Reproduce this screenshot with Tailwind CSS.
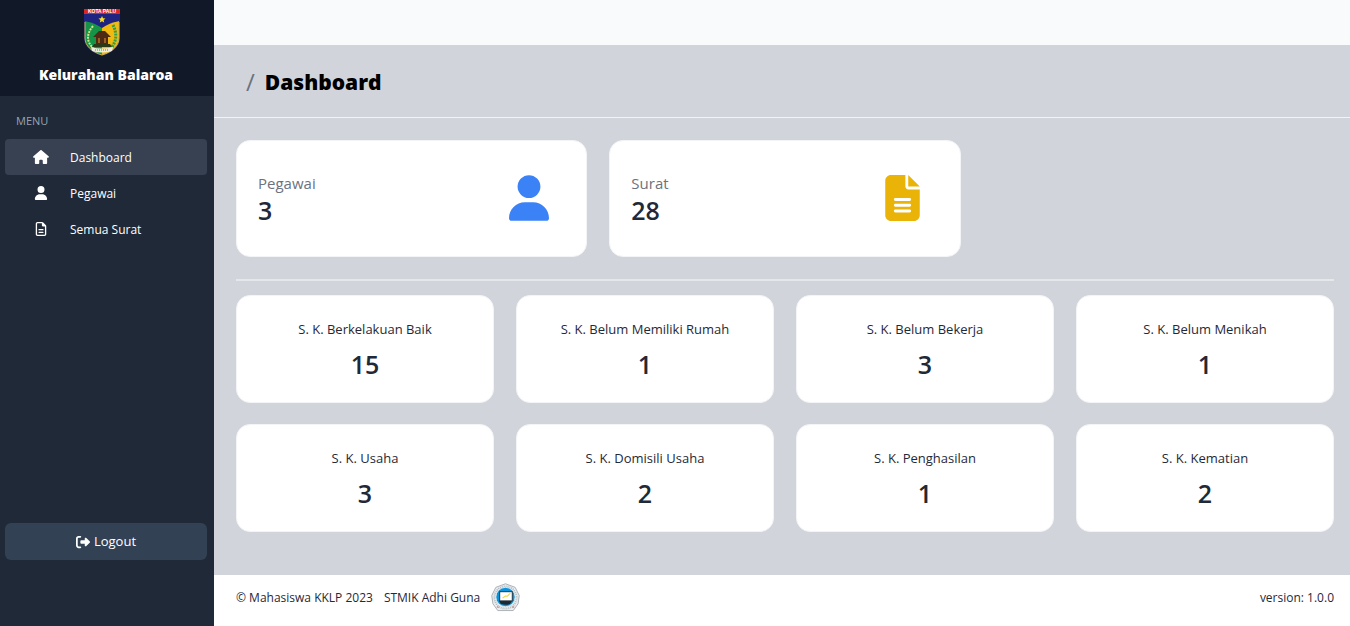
<!DOCTYPE html>
<html lang="id">
<head>
<meta charset="utf-8">
<meta name="viewport" content="width=device-width, initial-scale=1">
<title>Dashboard - Kelurahan Balaroa</title>
<script src="https://cdn.jsdelivr.net/npm/@tailwindcss/browser@4"></script>
</head>
<body class="flex min-h-screen bg-[#d1d5db] font-['Open_Sans','Noto_Sans',sans-serif] text-[#1f2937]">

<svg class="hidden" aria-hidden="true">
  <symbol id="house" viewBox="0 0 576 512"><path d="M575.8 255.5c0 18-15 32.1-32 32.1h-32l.7 160.2c0 2.7-.2 5.4-.5 8.1V472c0 22.1-17.9 40-40 40H456c-1.1 0-2.2 0-3.3-.1c-1.4 .1-2.8 .1-4.2 .1H416 392c-22.1 0-40-17.9-40-40V448 384c0-17.7-14.3-32-32-32H256c-17.7 0-32 14.3-32 32v64 24c0 22.1-17.9 40-40 40H160 128.1c-1.5 0-3-.1-4.5-.2c-1.2 .1-2.4 .2-3.6 .2H104c-22.1 0-40-17.9-40-40V360c0-.9 0-1.9 .1-2.8V287.6H32c-18 0-32-14-32-32.1c0-9 3-17 10-24L266.4 8c7-7 15-8 22-8s15 2 21 7L564.8 231.5c8 7 12 15 11 24z"/></symbol>
  <symbol id="user" viewBox="0 0 448 512"><path d="M224 256A128 128 0 1 0 224 0a128 128 0 1 0 0 256zm-45.7 48C79.8 304 0 383.8 0 482.3C0 498.7 13.3 512 29.7 512H418.3c16.4 0 29.7-13.3 29.7-29.7C448 383.8 368.2 304 269.7 304H178.3z"/></symbol>
  <symbol id="file" viewBox="0 0 384 512"><path d="M64 464c-8.8 0-16-7.2-16-16V64c0-8.8 7.2-16 16-16H224v80c0 17.7 14.3 32 32 32h80V448c0 8.8-7.2 16-16 16H64zM64 0C28.7 0 0 28.7 0 64V448c0 35.3 28.7 64 64 64H320c35.3 0 64-28.7 64-64V154.5c0-17-6.7-33.3-18.7-45.3L274.7 18.7C262.7 6.7 246.5 0 229.5 0H64zm56 256c-13.3 0-24 10.7-24 24s10.7 24 24 24H264c13.3 0 24-10.7 24-24s-10.7-24-24-24H120zm0 96c-13.3 0-24 10.7-24 24s10.7 24 24 24H264c13.3 0 24-10.7 24-24s-10.7-24-24-24H120z"/></symbol>
  <symbol id="file-solid" viewBox="0 0 384 512"><path d="M64 0C28.7 0 0 28.7 0 64V448c0 35.3 28.7 64 64 64H320c35.3 0 64-28.7 64-64V160H256c-17.7 0-32-14.3-32-32V0H64zM256 0V128H384L256 0zM112 256H272c8.8 0 16 7.2 16 16s-7.2 16-16 16H112c-8.8 0-16-7.2-16-16s7.2-16 16-16zm0 64H272c8.8 0 16 7.2 16 16s-7.2 16-16 16H112c-8.8 0-16-7.2-16-16s7.2-16 16-16zm0 64H272c8.8 0 16 7.2 16 16s-7.2 16-16 16H112c-8.8 0-16-7.2-16-16s7.2-16 16-16z"/></symbol>
  <symbol id="logout" viewBox="0 0 512 512"><path d="M377.9 105.9L500.7 228.7c7.2 7.2 11.3 17.1 11.3 27.3s-4.1 20.1-11.3 27.3L377.9 406.1c-6.4 6.4-15 9.9-24 9.9c-18.7 0-33.9-15.2-33.9-33.9l0-62.1-128 0c-17.7 0-32-14.3-32-32l0-64c0-17.7 14.3-32 32-32l128 0 0-62.1c0-18.7 15.2-33.9 33.9-33.9c9 0 17.6 3.6 24 9.9zM160 96L96 96c-17.7 0-32 14.3-32 32l0 256c0 17.7 14.3 32 32 32l64 0c17.7 0 32 14.3 32 32s-14.3 32-32 32l-64 0c-53 0-96-43-96-96L0 128C0 75 43 32 96 32l64 0c17.7 0 32 14.3 32 32s-14.3 32-32 32z"/></symbol>
</svg>

<aside class="flex w-[214px] shrink-0 flex-col bg-[#1f2937] text-white">
  <div class="flex h-24 flex-col items-center bg-[#111827] pt-2 pr-[2px]">
    <div class="pr-2">
      <svg class="h-12 w-9" viewBox="0 0 36 48" role="img" aria-label="Lambang Kota Palu">
        <path d="M0 6h36v24c0 9-8 15-18 18C8 45 0 39 0 30z" fill="#1e2480"/>
        <path d="M1 13Q11 15 18 20V47C8 44 1 38 1 30z" fill="#159447"/>
        <path d="M35 13Q25 15 18 20V47C28 44 35 38 35 30z" fill="#f2b90f"/>
        <path d="M0 6h36v7Q18 14 18 19Q18 14 0 13z" fill="#1e2480"/>
        <path d="M1 14v16c0 8 7 14 17 17c10-3 17-9 17-17V14" fill="none" stroke="#c9b04a" stroke-width="1"/>
        <path d="M9 18Q-1 30 9 40" fill="none" stroke="#d5e08c" stroke-width="2" stroke-dasharray="2 1"/>
        <path d="M29 17Q35 29 28 39" fill="none" stroke="#2f9e48" stroke-width="3" stroke-dasharray="2 1"/>
        <path d="M9 29l6-6h6l6 6h-3v7H12v-7z" fill="#4d2a14"/>
        <path d="M14 30h2v5h-2zM20 30h2v5h-2z" fill="#9a5f22"/>
        <path d="M10 36h16l2 3H8z" fill="#2b3a16"/>
        <path d="M7 39q11 3 22 0l-1 4q-10 3-20 0z" fill="#eeecdc"/>
        <path d="M11 42h14" stroke="#777" stroke-width="1" stroke-dasharray="1 1"/>
        <path d="M18 8l1 2.300 2.500.2-1.900 1.600.6 2.400-2.200-1.300-2.200 1.300.6-2.400-1.900-1.600 2.500-.2z" fill="#ffe11b"/>
        <rect width="36" height="5" y="1" fill="#dc2626"/>
        <text x="18" y="5" text-anchor="middle" font-family="Liberation Sans, sans-serif" font-size="5" font-weight="700" fill="#fff">KOTA PALU</text>
      </svg>
    </div>
    <h2 class="mt-[9px] text-[14px] leading-5 font-extrabold">Kelurahan Balaroa</h2>
  </div>

  <p class="mt-4 px-4 text-[11px] leading-[18px] text-[#9ca3af]">MENU</p>
  <nav class="mt-[9px] flex flex-col pr-[7px] pl-[5px] text-xs">
    <a href="#" aria-current="page" class="flex h-9 items-center rounded-sm bg-[#374151]"><span class="flex w-[65px] justify-center pr-px pb-px pl-2"><svg class="h-[14px] w-4 fill-current" aria-hidden="true"><use href="#house"/></svg></span><span class="pt-px">Dashboard</span></a>
    <a href="#" class="flex h-9 items-center rounded-sm"><span class="flex w-[65px] justify-center pr-px pb-px pl-2"><svg class="h-[14px] w-4 fill-current" aria-hidden="true"><use href="#user"/></svg></span><span class="pt-px">Pegawai</span></a>
    <a href="#" class="flex h-9 items-center rounded-sm"><span class="flex w-[65px] justify-center pr-px pb-px pl-2"><svg class="h-[14px] w-4 fill-current" aria-hidden="true"><use href="#file"/></svg></span><span class="pt-px">Semua Surat</span></a>
  </nav>

  <div class="mt-auto pr-[7px] pb-[66px] pl-[5px]">
    <button type="button" class="flex h-[37px] w-full items-center justify-center gap-1 rounded-md bg-[#334155] text-[13px]"><svg class="size-[14px] fill-current" aria-hidden="true"><use href="#logout"/></svg>Logout</button>
  </div>
</aside>

<div class="flex min-w-0 grow flex-col">
  <div class="h-[45px] bg-[#f9fafb]"></div>
  <header class="flex h-[73px] items-center gap-[10px] border-b border-[#f3f4f6] px-8 pt-px">
    <span class="text-2xl text-[#6b7280]">/</span>
    <h1 class="text-[21px] leading-8 font-extrabold text-black">Dashboard</h1>
  </header>

  <main class="grow pt-[22px] pr-4 pb-[43px] pl-[22px]">
    <div class="grid grid-cols-3 gap-[22px]">
      <section class="flex h-[117px] items-center justify-between rounded-[14px] border border-[#f3f4f6] bg-white pr-[37px] pb-[2px] pl-[21px]">
        <div>
          <h3 class="text-[15px] leading-6 text-[#6b7280]">Pegawai</h3>
          <p class="text-[25px] leading-[30px] font-semibold">3</p>
        </div>
        <svg class="h-[46px] w-10 fill-[#3b82f6]" aria-hidden="true"><use href="#user"/></svg>
      </section>
      <section class="flex h-[117px] items-center justify-between rounded-[14px] border border-[#f3f4f6] bg-white pr-10 pb-[2px] pl-[21px]">
        <div>
          <h3 class="text-[15px] leading-6 text-[#6b7280]">Surat</h3>
          <p class="text-[25px] leading-[30px] font-semibold">28</p>
        </div>
        <svg class="h-[46px] w-[35px] fill-[#eab308]" aria-hidden="true"><use href="#file-solid"/></svg>
      </section>
    </div>

    <hr class="mt-[22px] mb-[14px] border-t-2 border-[#e5e7eb]">

    <div class="grid grid-cols-4 gap-x-[22px] gap-y-[21px] text-center">
      <section class="h-[108px] rounded-[14px] border border-[#f3f4f6] bg-white pt-[23px]"><h3 class="text-[13px] leading-5">S. K. Berkelakuan Baik</h3><p class="mt-[9px] text-[25px] leading-8 font-semibold">15</p></section>
      <section class="h-[108px] rounded-[14px] border border-[#f3f4f6] bg-white pt-[23px]"><h3 class="text-[13px] leading-5">S. K. Belum Memiliki Rumah</h3><p class="mt-[9px] text-[25px] leading-8 font-semibold">1</p></section>
      <section class="h-[108px] rounded-[14px] border border-[#f3f4f6] bg-white pt-[23px]"><h3 class="text-[13px] leading-5">S. K. Belum Bekerja</h3><p class="mt-[9px] text-[25px] leading-8 font-semibold">3</p></section>
      <section class="h-[108px] rounded-[14px] border border-[#f3f4f6] bg-white pt-[23px]"><h3 class="text-[13px] leading-5">S. K. Belum Menikah</h3><p class="mt-[9px] text-[25px] leading-8 font-semibold">1</p></section>
      <section class="h-[108px] rounded-[14px] border border-[#f3f4f6] bg-white pt-[23px]"><h3 class="text-[13px] leading-5">S. K. Usaha</h3><p class="mt-[9px] text-[25px] leading-8 font-semibold">3</p></section>
      <section class="h-[108px] rounded-[14px] border border-[#f3f4f6] bg-white pt-[23px]"><h3 class="text-[13px] leading-5">S. K. Domisili Usaha</h3><p class="mt-[9px] text-[25px] leading-8 font-semibold">2</p></section>
      <section class="h-[108px] rounded-[14px] border border-[#f3f4f6] bg-white pt-[23px]"><h3 class="text-[13px] leading-5">S. K. Penghasilan</h3><p class="mt-[9px] text-[25px] leading-8 font-semibold">1</p></section>
      <section class="h-[108px] rounded-[14px] border border-[#f3f4f6] bg-white pt-[23px]"><h3 class="text-[13px] leading-5">S. K. Kematian</h3><p class="mt-[9px] text-[25px] leading-8 font-semibold">2</p></section>
    </div>
  </main>

  <footer class="flex items-center justify-between bg-white pt-2 pr-4 pb-[14px] pl-[22px] text-xs">
    <div class="flex items-center gap-[11px]">
      <span>© Mahasiswa KKLP 2023</span>
      <span>STMIK Adhi Guna</span>
      <svg class="size-[29px]" viewBox="0 0 30 30" role="img" aria-label="Logo STMIK Adhi Guna">
        <path d="M15 .8L25 4.500 29.200 13 28 21.500 23 28.500H7L2 21.500.8 13 5 4.500z" fill="#eceff1" stroke="#a9afb3" stroke-width="1" stroke-linejoin="round"/>
        <circle cx="15" cy="15" r="11.500" fill="none" stroke="#b4babe" stroke-width="2" stroke-dasharray="1 1"/>
        <circle cx="15" cy="14.500" r="10" fill="#0b93dc" stroke="#dce6eb" stroke-width="1"/>
        <path d="M8 18h14l-2 3.500q-5 2-10 0z" fill="#1c2730"/>
        <rect x="9" y="9" width="13" height="9.500" fill="#fff" stroke="#26323a" stroke-width="1"/>
        <path d="M12 15.500l3-2 2 0 3-3" stroke="#eadb4c" stroke-width="1.200" fill="none"/>
        <path d="M6 24.500l2 1M22 25.500l2-1" stroke="#e08b8b" stroke-width="1.500"/>
      </svg>
    </div>
    <span>version: 1.0.0</span>
  </footer>
</div>
</body>
</html>
